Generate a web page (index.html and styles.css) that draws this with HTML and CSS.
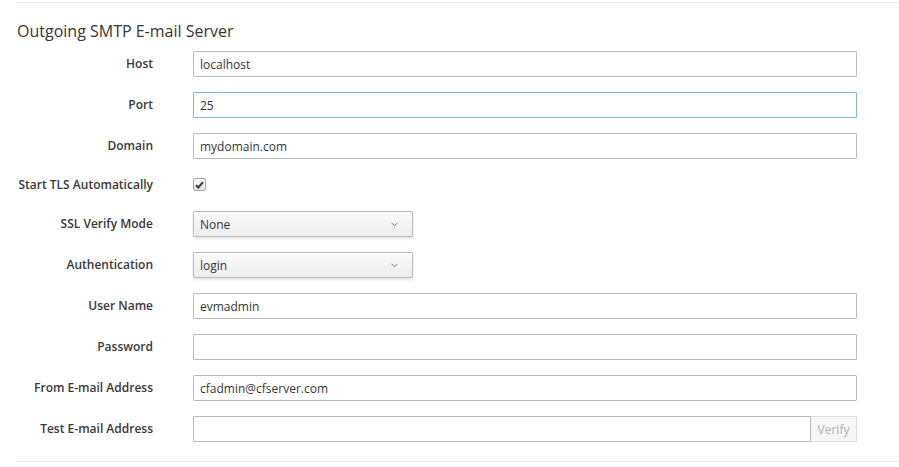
FILE: index.html
```html
<!DOCTYPE html>
<html>
<head>
<meta charset="utf-8">
<link rel="stylesheet" href="styles.css">
</head>
<body>
<div class="panel">
  <h3 class="title">Outgoing SMTP E-mail Server</h3>
  <div class="form">
    <label class="lbl">Host</label>
    <div class="ctl"><input class="inp" type="text" value="localhost"></div>

    <label class="lbl">Port</label>
    <div class="ctl"><input class="inp focus" type="text" value="25"></div>

    <label class="lbl">Domain</label>
    <div class="ctl"><input class="inp" type="text" value="mydomain.com"></div>

    <label class="lbl lbl-check">Start TLS Automatically</label>
    <div class="ctl ctl-check"><span class="check"><svg width="9" height="8" viewBox="0 0 9 8"><path d="M1 4.2 L3.4 6.5 L8 1.2" fill="none" stroke="#3b3b3b" stroke-width="2"/></svg></span></div>

    <label class="lbl">SSL Verify Mode</label>
    <div class="ctl"><div class="sel"><span>None</span><svg class="chev" width="7" height="5" viewBox="0 0 7 5"><path d="M0.5 0.8 L3.5 3.8 L6.5 0.8" fill="none" stroke="#777" stroke-width="1"/></svg></div></div>

    <label class="lbl">Authentication</label>
    <div class="ctl"><div class="sel"><span>login</span><svg class="chev" width="7" height="5" viewBox="0 0 7 5"><path d="M0.5 0.8 L3.5 3.8 L6.5 0.8" fill="none" stroke="#777" stroke-width="1"/></svg></div></div>

    <label class="lbl">User Name</label>
    <div class="ctl"><input class="inp" type="text" value="evmadmin"></div>

    <label class="lbl">Password</label>
    <div class="ctl"><input class="inp" type="password" value=""></div>

    <label class="lbl">From E-mail Address</label>
    <div class="ctl"><input class="inp" type="text" value="cfadmin@cfserver.com"></div>

    <label class="lbl">Test E-mail Address</label>
    <div class="ctl group"><input class="inp" type="text" value=""><button class="btn" disabled>Verify</button></div>
  </div>
</div>
</body>
</html>
```
FILE: styles.css
```css
html, body {
  margin: 0;
  padding: 0;
  background: #fff;
}
body {
  font-family: "Open Sans", "Liberation Sans", sans-serif;
  font-size: 12px;
  color: #363636;
}
.panel {
  margin: 2px 0 0 17px;
  border-top: 1px solid #ededed;
  border-bottom: 1px solid #ededed;
  padding-bottom: 19px;
}
.title {
  margin: 17px 0 0 0;
  font-size: 16px;
  font-weight: 400;
  line-height: 22px;
  color: #363636;
}
.form {
  display: grid;
  grid-template-columns: 136px 664px;
  column-gap: 40px;
  row-gap: 15px;
  margin-top: 9px;
}
.lbl {
  text-align: right;
  font-weight: 600;
  line-height: 26px;
  height: 26px;
  white-space: nowrap;
  color: #393939;
}
.lbl-check {
  line-height: 22px;
  height: 22px;
}
.ctl {
  display: flex;
  height: 26px;
}
.ctl-check {
  height: 22px;
  align-items: flex-start;
}
.inp {
  box-sizing: border-box;
  width: 100%;
  height: 26px;
  margin: 0;
  padding: 2px 6px;
  border: 1px solid #bbb;
  border-radius: 1px;
  font-family: "Open Sans", "Liberation Sans", sans-serif;
  font-size: 12px;
  color: #363636;
  background: #fff;
  outline: none;
}
.inp.focus {
  border-color: #7bb8e0;
}
.check {
  box-sizing: border-box;
  width: 13px;
  height: 13px;
  margin-top: 4px;
  border: 1px solid #aaa;
  border-radius: 2px;
  background: linear-gradient(#fdfdfd, #e6e6e6);
  display: flex;
  align-items: center;
  justify-content: center;
}
.sel {
  box-sizing: border-box;
  width: 220px;
  height: 26px;
  padding: 0 14px 0 6px;
  border: 1px solid #bbb;
  border-radius: 1px;
  background: linear-gradient(#fafafa, #ededed);
  box-shadow: 0 2px 3px rgba(3, 3, 3, 0.1);
  display: flex;
  align-items: center;
  justify-content: space-between;
}
.group .inp {
  flex: 1;
  width: auto;
  border-radius: 1px 0 0 1px;
}
.btn {
  box-sizing: border-box;
  width: 46px;
  height: 26px;
  margin: 0;
  padding: 0;
  border: 1px solid #e0e0e0;
  border-left: none;
  border-radius: 0 1px 1px 0;
  background: #f6f6f6;
  color: #b0b0b0;
  font-family: "Open Sans", "Liberation Sans", sans-serif;
  font-size: 12px;
}
```
